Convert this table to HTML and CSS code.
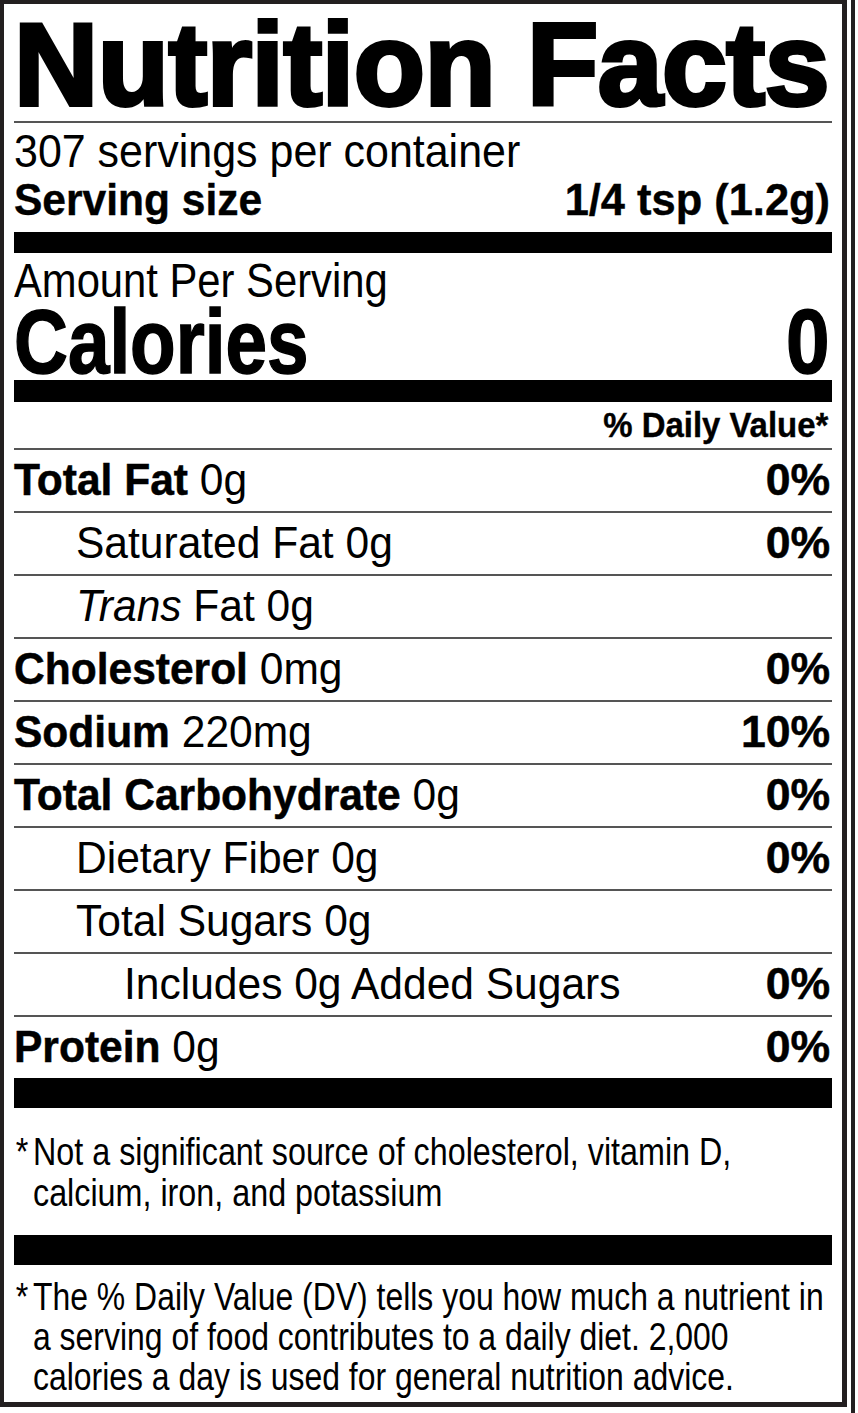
FILE: index.html
```html
<!DOCTYPE html>
<html lang="en">
<head>
<meta charset="utf-8">
<title>Nutrition Facts</title>
<link rel="stylesheet" href="styles.css">
</head>
<body>
<div class="page">
  <section class="label">
    <h1 class="title">Nutrition Facts</h1>
    <div class="rule-thin"></div>
    <p class="servings">307 servings per container</p>
    <div class="serving-size"><span class="ss-name">Serving size</span><span class="ss-val">1/4 tsp (1.2g)</span></div>
    <div class="bar bar-a"></div>
    <p class="amount">Amount Per Serving</p>
    <div class="calories"><span class="cal-name">Calories</span><span class="cal-val">0</span></div>
    <div class="bar bar-b"></div>
    <p class="dv-head">% Daily Value*</p>
    <ul class="nutrients">
      <li class="row"><span class="name"><b>Total Fat</b> 0g</span><b class="pct">0%</b></li>
      <li class="row indent-1"><span class="name">Saturated Fat 0g</span><b class="pct">0%</b></li>
      <li class="row indent-1"><span class="name"><i>Trans</i> Fat 0g</span></li>
      <li class="row"><span class="name"><b>Cholesterol</b> 0mg</span><b class="pct">0%</b></li>
      <li class="row"><span class="name"><b>Sodium</b> 220mg</span><b class="pct">10%</b></li>
      <li class="row"><span class="name"><b>Total Carbohydrate</b> 0g</span><b class="pct">0%</b></li>
      <li class="row indent-1"><span class="name">Dietary Fiber 0g</span><b class="pct">0%</b></li>
      <li class="row indent-1"><span class="name">Total Sugars 0g</span></li>
      <li class="row indent-2"><span class="name">Includes 0g Added Sugars</span><b class="pct">0%</b></li>
      <li class="row"><span class="name"><b>Protein</b> 0g</span><b class="pct">0%</b></li>
    </ul>
    <div class="bar bar-c"></div>
    <div class="note note-1"><span class="ast">*</span><p class="note-text">Not a significant source of cholesterol, vitamin D,<br>calcium, iron, and potassium</p></div>
    <div class="bar bar-c"></div>
    <div class="note note-2"><span class="ast">*</span><p class="note-text">The % Daily Value (DV) tells you how much a nutrient in<br>a serving of food contributes to a daily diet. 2,000<br>calories a day is used for general nutrition advice.</p></div>
  </section>
  <div class="edge"></div>
</div>
</body>
</html>
```

FILE: styles.css
```css
html, body {
  margin: 0;
  padding: 0;
  background: #fff;
}
body {
  font-family: "Liberation Sans", Arial, sans-serif;
  color: #000;
}
.page {
  display: flex;
  align-items: stretch;
  height: 1413px;
}
.label {
  box-sizing: border-box;
  width: 847px;
  height: 1407px;
  border: 4px solid #231f20;
  border-right-width: 5px;
  border-bottom-width: 5px;
  padding: 0 10px;
  display: flex;
  flex-direction: column;
}
.edge {
  width: 4px;
  margin-left: 4px;
  background: #231f20;
}
.title {
  margin: 0;
  padding-top: 5px;
  font-size: 116px;
  line-height: 112px;
  font-weight: 700;
  letter-spacing: -0.5px;
  -webkit-text-stroke: 4px #000;
  white-space: nowrap;
  transform: scaleX(1.005);
  transform-origin: left center;
}
.rule-thin {
  height: 2px;
  background: #555;
  flex: none;
}
.servings {
  margin: 0;
  font-size: 47px;
  line-height: 55px;
  white-space: nowrap;
  transform: scaleX(0.914);
  transform-origin: left center;
}
.serving-size {
  display: flex;
  justify-content: space-between;
  font-size: 45px;
  line-height: 43px;
  font-weight: 700;
  -webkit-text-stroke: 0.4px #000;
  padding: 0 2px 11px 0;
  white-space: nowrap;
}
.ss-name {
  transform: scaleX(0.945);
  transform-origin: left center;
}
.ss-val {
  transform: scaleX(0.965);
  transform-origin: right center;
}
.bar {
  background: #000;
  flex: none;
}
.bar-a { height: 21px; }
.bar-b { height: 22px; }
.bar-c { height: 30px; }
.amount {
  margin: 0;
  font-size: 48px;
  line-height: 55px;
  white-space: nowrap;
  transform: scaleX(0.87);
  transform-origin: left center;
}
.calories {
  display: flex;
  justify-content: space-between;
  font-size: 91px;
  line-height: 67px;
  font-weight: 700;
  -webkit-text-stroke: 1.5px #000;
  padding: 0 2px 5px 0;
}
.cal-name {
  transform: scaleX(0.82);
  transform-origin: left center;
}
.cal-val {
  transform: scaleX(0.86);
  transform-origin: right center;
}
.dv-head {
  margin: 0;
  padding-right: 4px;
  text-align: right;
  font-size: 35px;
  line-height: 46px;
  font-weight: 700;
  -webkit-text-stroke: 0.4px #000;
  white-space: nowrap;
  transform: scaleX(0.94);
  transform-origin: right center;
}
.nutrients {
  list-style: none;
  margin: 0;
  padding: 0;
}
.row {
  display: flex;
  justify-content: space-between;
  border-top: 2px solid #555;
  height: 61px;
  line-height: 59px;
  font-size: 45px;
  padding-right: 2px;
  white-space: nowrap;
}
.row b {
  font-weight: 700;
  -webkit-text-stroke: 0.5px #000;
}
.name {
  transform: scaleX(0.945);
  transform-origin: left center;
}
.pct {
  transform: scaleX(0.99);
  transform-origin: right center;
}
.indent-1 { padding-left: 62px; }
.indent-2 { padding-left: 110px; }
.note {
  display: flex;
  font-size: 38px;
  line-height: 41px;
  white-space: nowrap;
}
.note-1 { padding: 24px 0 21px; }
.note-2 { padding-top: 12px; line-height: 40px; }
.ast {
  width: 19px;
  flex: none;
  padding-left: 2px;
  box-sizing: border-box;
  transform: scaleX(0.85);
  transform-origin: left center;
}
.note-text {
  margin: 0;
  transform-origin: left center;
}
.note-1 .note-text { transform: scaleX(0.85); }
.note-2 .note-text { transform: scaleX(0.84); }
```
